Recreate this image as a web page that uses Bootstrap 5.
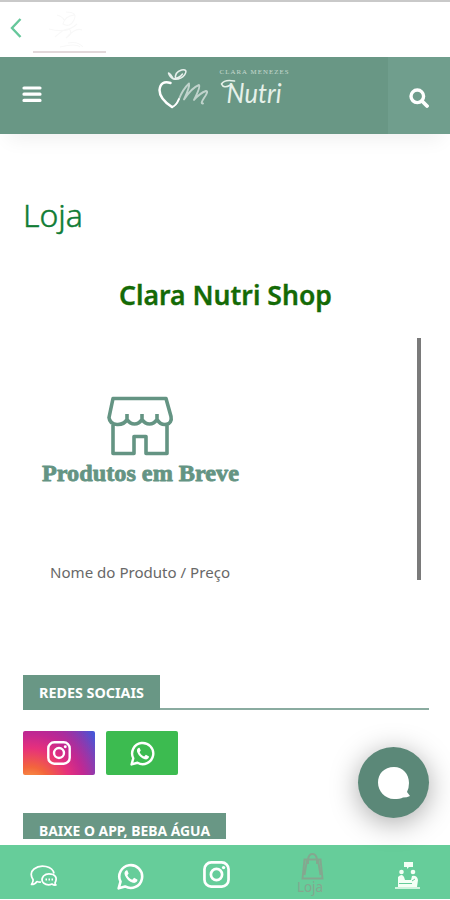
<!DOCTYPE html>
<html lang="pt-BR">
<head>
<meta charset="utf-8">
<meta name="viewport" content="width=device-width, initial-scale=1">
<title>Loja</title>
<link href="https://cdn.jsdelivr.net/npm/bootstrap@5.3.0/dist/css/bootstrap.min.css" rel="stylesheet">
<style>
body{font-family:"Noto Sans","Open Sans",sans-serif;background:#fff}
svg{display:block;flex:none}
.app{width:450px;height:900px}
.topbar{height:57px;border-top:2px solid #c9c9c9;padding-left:10px}
.thumb{width:73px;height:44px;margin:7px 0 0 11px;border-bottom:2px solid #e2d8da}
.site-head{height:77px;background:#699785;box-shadow:0 14px 18px -8px rgba(0,0,0,.06)}
.menu-btn{width:63px;padding:0 0 4px 22px}
.search-btn{width:62px;background:#709e8d;padding-top:5px}
.content{height:705px;padding:0 21px 0 23px}
.page-title{font-size:30.5px;line-height:40px;margin:62px 0 0;font-weight:300}
.shop-title{font-size:27px;line-height:36px;margin:42px 0 0;font-weight:600;width:405px}
.shop-box{height:242px;margin-top:24px;width:398px;border-right:4px solid #7a7a7a}
.product{width:234px;padding-top:57px}
.product-name{font-size:14.500px;line-height:20px;margin-top:76px}
.sect{border-bottom:2px solid #8aaba0;height:35px}
.sect-label{height:35px;background:#699785;font-weight:700;font-size:14px;padding-left:16px}
.sect-social{margin-top:95px}
.sect-app{margin-top:38px}
.social-row{gap:11px;margin-top:21px}
.social{width:72px;height:44px;border-radius:2px}
.insta{background:radial-gradient(ellipse 115% 180% at 10% 125%,#fbb04b 0,#f3653c 24%,#e6307c 48%,#c32891 65%,rgba(165,35,155,0) 100%),linear-gradient(90deg,#8e189b,#7d36b2 55%,#4656d8)}
.wa{background:#3cbb50}
.chat-fab{width:71px;height:71px;right:21px;top:747px;background:#5b8878;box-shadow:0 5px 28px rgba(0,0,0,.34)}
.tabs{height:54px;background:#66cd9a;margin-top:6px;padding-left:1px}
.tabs a{width:86px;flex:none}
.tabs .tab-shop{width:74px;margin-left:16px}
.tabs .tab-visit{width:101px;padding-left:45px}
</style>
<script src="https://cdn.jsdelivr.net/npm/bootstrap@5.3.0/dist/js/bootstrap.bundle.min.js"></script>
</head>
<body>
<svg width="0" height="0" class="position-absolute" aria-hidden="true">
<symbol id="wa" viewBox="0 0 26 26"><path d="M1.600 24.400 3.400 18A11 11 0 1 1 7.800 22.600Z" fill="none" stroke="#fff" stroke-width="2.500" stroke-linejoin="round"/><path d="M9.100 7C7.500 7.800 6.600 9.600 7.700 12c1.600 3.600 4.200 6 7.600 7 2.300.6 4.300-.6 4.500-2.800l-3.300-1.900-1.800 1.800c-2.200-.9-3.800-2.400-4.700-4.400l1.200-1.700-1.300-2.900Z" fill="#fff"/></symbol>
<symbol id="ig" viewBox="0 0 26 26"><rect x="1.400" y="1.400" width="23.200" height="23.200" rx="6.500" fill="none" stroke="#fff" stroke-width="2.600"/><circle cx="13" cy="13" r="5.400" fill="none" stroke="#fff" stroke-width="2.600"/><circle cx="19.800" cy="6.300" r="1.600" fill="#fff"/></symbol>
</svg>
<div class="app position-relative overflow-hidden d-flex flex-column">
  <div class="topbar d-flex align-items-start flex-shrink-0">
    <svg width="12" height="20" class="mt-3" viewBox="0 0 12 20" fill="none" stroke="#66c79b" stroke-width="2.400"><path d="M10.500 1 2 10l8.500 9"/></svg>
    <div class="thumb"><svg width="73" height="42" fill="none" stroke="#f8f8f8" stroke-width="1.100"><path d="M24 6q6 2 7 5m2-8q12 0 8 8t-11 4q2-8 11-9M16 20q18 5 28-5m-22 13q12-11 15-7t-4 8q10-11 16-8m-14 13q10-2 15 4M27 38q16-4 20 0"/></svg></div>
  </div>
  <header class="site-head d-flex justify-content-between flex-shrink-0">
    <a href="#" class="menu-btn d-flex align-items-center" aria-label="Menu"><svg width="20" height="18" stroke="#fff" stroke-width="3.200" stroke-linecap="round"><path d="M2 3h16M2 9.200h16M2 15.400h16"/></svg></a>
    <svg width="140" height="77" viewBox="155.500 57 140 77" fill="none" stroke="#fff" stroke-linecap="round" stroke-linejoin="round">
      <path d="M170 83q-10-3-11 7 0 9 12.500 17" stroke-width="2.500"/>
      <path d="M171.500 107q4-1 7-8 4-10 10-15.500 1 3-5 16 8-12 15-14.500 2 1-5 15 6-7 12-9 3 0-2 7-4 6-1 5.500" stroke-width="1.900" opacity=".58"/>
      <path d="M171.500 107q4-1 7-8" stroke-width="1.900"/>
      <path d="M175 79q-1-7 6-9 7-1 3 5-4 5-11 4-3-5-5-6 1 4 5 6M173 79q6-1 9-5" stroke-width="1.500" opacity=".85"/>
      <g stroke="none" fill="#e6f1e9"><text x="219" y="74.300" font-family="Liberation Serif,serif" font-size="6.800" textLength="69" opacity=".72">CLARA MENEZES</text>
      <text x="226" y="103" font-family="Lato,sans-serif" font-style="italic" font-size="27" textLength="55" lengthAdjust="spacingAndGlyphs">Nutri</text></g>
      <path d="M230 85q-7 4-9-1 3-5 13-3" stroke="#e6f1e9" stroke-width="1.600"/>
    </svg>
    <a href="#" class="search-btn d-flex justify-content-center align-items-center" aria-label="Buscar"><svg width="20" height="20" fill="none" stroke="#fff" stroke-linecap="round"><circle cx="8.300" cy="8.300" r="6.300" stroke-width="3.400"/><path d="m13 13 5 5" stroke-width="3.800"/></svg></a>
  </header>
  <main class="content overflow-hidden flex-shrink-0">
    <h1 class="page-title"><svg width="64" height="40" fill="#107c35" stroke="#107c35" stroke-width=".45" overflow="visible"><text x="0" y="31" textLength="60" lengthAdjust="spacingAndGlyphs">Loja</text></svg></h1>
    <h2 class="shop-title d-flex justify-content-center"><svg width="213" height="36" fill="#146a06" stroke="#146a06" stroke-width=".35" overflow="visible"><text x="0" y="27" textLength="213" lengthAdjust="spacingAndGlyphs">Clara Nutri Shop</text></svg></h2>
    <section class="shop-box">
      <div class="product d-flex flex-column align-items-center">
        <svg width="202" height="92" viewBox="39 395 202 92" fill="none" stroke="#649483" stroke-width="3.600" stroke-linejoin="round">
          <path d="M113 398.500h53l5 18c2 9-9 11-14 3-4 6-11 6-15 0-4 6-11 6-15 0-4 7-17 7-18-2Z M127 419v-5M142 419v-5M157 419v-5M113 423v30.500h21v-17h12v17h21v-30"/>
          <text x="42" y="480.500" fill="#649483" stroke="#649483" stroke-width=".8" font-family="Liberation Serif,serif" font-weight="700" font-size="23" textLength="197" lengthAdjust="spacingAndGlyphs">Produtos em Breve</text>
        </svg>
        <div class="product-name"><svg width="180" height="20" fill="#686868" overflow="visible"><text y="15" textLength="180" lengthAdjust="spacingAndGlyphs">Nome do Produto / Preço</text></svg></div>
      </div>
    </section>
    <div class="sect sect-social d-flex">
      <div class="sect-label" style="width:137px"><svg width="106" height="35" fill="#fff"><text y="23" textLength="105" lengthAdjust="spacingAndGlyphs">REDES SOCIAIS</text></svg></div>
    </div>
    <div class="d-flex social-row">
      <a href="#" class="social insta d-flex align-items-center justify-content-center" aria-label="Instagram"><svg width="24" height="24"><use href="#ig"/></svg></a>
      <a href="#" class="social wa d-flex align-items-center justify-content-center" aria-label="WhatsApp"><svg width="25" height="25"><use href="#wa"/></svg></a>
    </div>
    <div class="sect sect-app d-flex">
      <div class="sect-label" style="width:203px"><svg width="172" height="35" fill="#fff"><text y="23" textLength="171" lengthAdjust="spacingAndGlyphs">BAIXE O APP, BEBA ÁGUA</text></svg></div>
    </div>
  </main>
  <nav class="tabs d-flex align-items-center flex-shrink-0">
    <a href="#" class="d-flex justify-content-center pt-2" aria-label="Chat"><svg width="28" height="24" viewBox="0 0 28 24" fill="none" stroke="#fff" stroke-width="1.700" stroke-linejoin="round"><path d="M11 18q-2 .3-4-.5-2 3-5.500 3 2-3 1.500-5Q-1 9 4 5q5-4 12-2.500 7 1.500 8 7"/><path d="M25 19q3-6-2-8.500-6-2-9.500 1.500-3 4 0 7 4 3 8.500 1 2 1.500 4 1-1-1-1-2Z"/><path d="M15.500 15.500h1.500m1.500 0h1.500m1.500 0H23" stroke-width="2"/></svg></a>
    <a href="#" class="d-flex justify-content-center pt-1" aria-label="WhatsApp"><svg width="27" height="27" class="mt-1"><use href="#wa"/></svg></a>
    <a href="#" class="d-flex justify-content-center pt-1" aria-label="Instagram"><svg width="27" height="27"><use href="#ig"/></svg></a>
    <a href="#" class="tab-shop d-flex justify-content-center" aria-label="Loja"><svg width="32" height="48" viewBox="295 848 32 48" fill="none" stroke="#84a78f" stroke-width="1.900"><path d="m303.500 859.500-2 19h20l-2-19ZM307 864v-5q1-5 4.500-5t4.500 5v5M306 860l-2.500 15M317 860l2.500 15"/><text x="296" y="892" font-size="13.500" fill="#84a78f" stroke="none" textLength="26">Loja</text></svg></a>
    <a href="#" class="tab-visit d-flex pt-2" aria-label="Consulta"><svg width="28" height="32" viewBox="0 0 28 32" fill="#f4fff5"><path d="M10 2h9v5h-4l-2 2V7h-3Z"/><circle cx="7.500" cy="12" r="2.300"/><circle cx="19" cy="12" r="2.300"/><path d="M4 17q4-4 6 0l1 3h6l1-4q5-1 6 4l-1 7H4Z"/><path d="M1 28h25M5 22h14" stroke="#f4fff5" stroke-width="1.300"/><path d="M5 23.500h13M18 21l3-2" stroke="#66cd9a"/></svg></a>
  </nav>
  <a href="#" class="chat-fab position-absolute rounded-circle d-flex align-items-center justify-content-center" aria-label="Abrir chat"><svg width="34" height="34" viewBox="0 0 34 34" fill="#fff"><path d="M17 1C7 1 1 8 1 16.500S8 33 17 33c4 0 7-.5 9-1.500q4 0 7-1.500l-3-4q2-4 2-9C32 8 26 1 17 1Z"/></svg></a>
</div>
</body>
</html>
